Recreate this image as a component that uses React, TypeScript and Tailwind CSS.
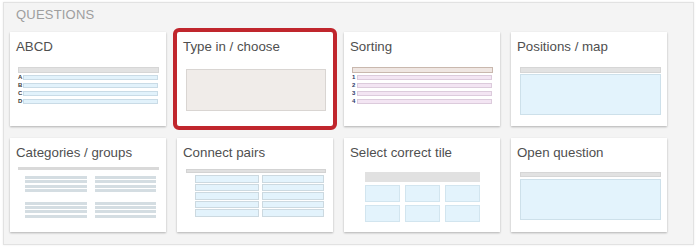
import React from "react";

const font = { fontFamily: '"Liberation Sans", Arial, sans-serif' };

function Card({ title, selected, children }: { title: string; selected?: boolean; children: React.ReactNode }) {
  return (
    <div
      className={
        "w-[156px] h-[94px] bg-white flex flex-col shadow-[0_1px_2px_rgba(0,0,0,0.28)] " +
        (selected ? "rounded-[2px] outline-4 outline-[#c0262d]" : "")
      }
    >
      <div className="pt-[7px] pl-[6px] text-[13.3px] leading-[16px] text-[#4f4f4f] whitespace-nowrap">{title}</div>
      {children}
    </div>
  );
}

function ListPreview({ labels, topCls, rowCls, labelCls }: { labels: string[]; topCls: string; rowCls: string; labelCls: string }) {
  return (
    <div className="ml-[8px] mt-[12px] w-[141px] flex flex-col">
      <div className={"h-[6px] border " + topCls} />
      <div className="mt-[2px] flex flex-col gap-[3px]">
        {labels.map((l) => (
          <div key={l} className="flex items-center h-[5px]">
            <span className={"w-[5px] text-[6px] leading-[5px] font-bold " + labelCls}>{l}</span>
            <div className={"flex-1 h-[5px] border mr-[1px] " + rowCls} />
          </div>
        ))}
      </div>
    </div>
  );
}

function Stripes() {
  return (
    <div className="flex flex-col gap-[1.3px]">
      {[0, 1, 2, 3].map((i) => (
        <div key={i} className="h-[3px] bg-[#d4dde2]" />
      ))}
    </div>
  );
}

export default function App() {
  return (
    <div style={font} className="w-[700px] h-[249px] bg-white pt-[2px] pl-[3px]">
      <div className="w-[691px] h-[243px] bg-[#f4f4f4] border border-[#e2e2e2] shadow-[0_0_2px_rgba(0,0,0,0.08)] pl-[6px]">
        <div className="pt-[4px] pl-[6px] text-[13px] leading-[15px] text-[#9e9e9e] tracking-[0.2px]">QUESTIONS</div>
        <div className="mt-[10px] grid grid-cols-[156px_156px_156px_156px] gap-x-[11px] gap-y-[12px]">
          <Card title="ABCD">
            <ListPreview
              labels={["A", "B", "C", "D"]}
              topCls="bg-[#e2e2e2] border-[#d6d6d6]"
              rowCls="bg-[#e2f2fb] border-[#c9dbe6]"
              labelCls="text-[#3a3a3a]"
            />
          </Card>
          <Card title="Type in / choose" selected>
            <div className="ml-[9px] mt-[14px] w-[140px] h-[42px] bg-[#f0ece9] border border-[#d9d5d2]" />
          </Card>
          <Card title="Sorting">
            <ListPreview
              labels={["1", "2", "3", "4"]}
              topCls="bg-[#efe6e2] border-[#c9b8ae]"
              rowCls="bg-[#f3e5f3] border-[#dccbdc]"
              labelCls="text-[#2b3866]"
            />
          </Card>
          <Card title="Positions / map">
            <div className="ml-[9px] mt-[12px] w-[141px] flex flex-col">
              <div className="h-[6px] bg-[#e2e2e2] border border-[#d6d6d6]" />
              <div className="mt-[1px] h-[41px] bg-[#e3f3fc] border border-[#cde0ea]" />
            </div>
          </Card>

          <Card title="Categories / groups">
            <div className="ml-[8px] mt-[6px] w-[141px] flex flex-col">
              <div className="h-[3px] bg-[#d9d9d9]" />
              <div className="mt-[6px] pl-[7px] grid grid-cols-[62px_61px] gap-x-[8px] gap-y-[10px]">
                <Stripes />
                <Stripes />
                <Stripes />
                <Stripes />
              </div>
            </div>
          </Card>
          <Card title="Connect pairs">
            <div className="ml-[9px] mt-[8px] w-[140px] flex flex-col">
              <div className="h-[4px] bg-[#e0e0e0] border border-[#d3d3d3]" />
              <div className="mt-[2px] pl-[9px] grid grid-cols-[64px_62px] gap-x-[3px] gap-y-[1px]">
                {[0, 1, 2, 3, 4].map((i) => (
                  <React.Fragment key={i}>
                    <div className="h-[7.5px] bg-[#e3f3fc] border border-[#ccd9e0]" />
                    <div className="h-[7.5px] bg-[#e3f3fc] border border-[#ccd9e0]" />
                  </React.Fragment>
                ))}
              </div>
            </div>
          </Card>
          <Card title="Select correct tile">
            <div className="ml-[21px] mt-[11px] w-[115px] flex flex-col">
              <div className="h-[10px] bg-[#e1e1e1]" />
              <div className="mt-[3px] grid grid-cols-3 gap-x-[5px] gap-y-[3px]">
                {[0, 1, 2, 3, 4, 5].map((i) => (
                  <div key={i} className="h-[17px] bg-[#e3f3fc] border border-[#d2e5ef]" />
                ))}
              </div>
            </div>
          </Card>
          <Card title="Open question">
            <div className="ml-[9px] mt-[11px] w-[141px] flex flex-col">
              <div className="h-[5px] bg-[#e2e2e2] border border-[#d6d6d6]" />
              <div className="mt-[2px] h-[41px] bg-[#e3f3fc] border border-[#cde0ea]" />
            </div>
          </Card>
        </div>
      </div>
    </div>
  );
}
